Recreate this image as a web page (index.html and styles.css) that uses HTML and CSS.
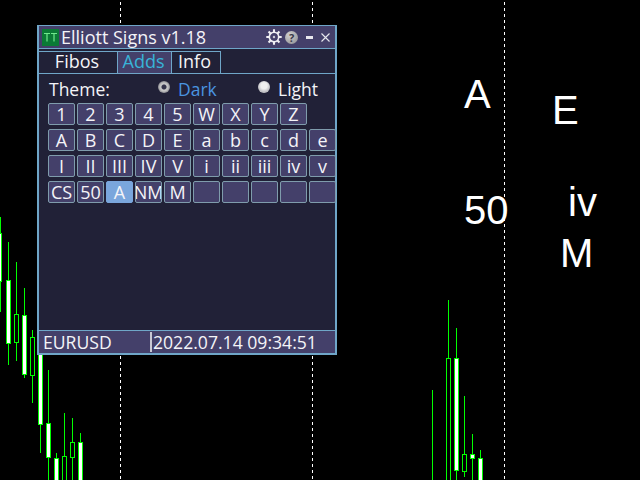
FILE: index.html
```html
<!DOCTYPE html>
<html lang="en">
<head>
<meta charset="utf-8">
<title>Elliott Signs v1.18</title>
<link rel="stylesheet" href="styles.css">
</head>
<body>
<div class="chart">
<svg class="chart-svg" width="640" height="480" viewBox="0 0 640 480">
  <g class="grid">
    <line x1="120.5" y1="0" x2="120.5" y2="480"/><line x1="312.5" y1="0" x2="312.5" y2="480"/><line x1="504.5" y1="0" x2="504.5" y2="480"/>
  </g>
  <g class="wick">
    <line x1="0.5" y1="217" x2="0.5" y2="312"/><line x1="8.5" y1="242" x2="8.5" y2="365"/><line x1="16.5" y1="262" x2="16.5" y2="361"/>
    <line x1="24.5" y1="288" x2="24.5" y2="378"/><line x1="32.5" y1="330" x2="32.5" y2="403"/><line x1="40.5" y1="340" x2="40.5" y2="453"/>
    <line x1="48.5" y1="370" x2="48.5" y2="480"/><line x1="56.5" y1="453" x2="56.5" y2="480"/><line x1="64.5" y1="413" x2="64.5" y2="480"/>
    <line x1="72.5" y1="418" x2="72.5" y2="480"/><line x1="80.5" y1="433" x2="80.5" y2="480"/>
    <line x1="432.5" y1="390" x2="432.5" y2="480"/><line x1="448.5" y1="300" x2="448.5" y2="480"/><line x1="456.5" y1="328" x2="456.5" y2="480"/>
    <line x1="464.5" y1="396" x2="464.5" y2="477"/><line x1="472.5" y1="434" x2="472.5" y2="480"/><line x1="480.5" y1="450" x2="480.5" y2="480"/>
  </g>
  <g class="bull">
    <rect x="-2.5" y="233.5" width="4" height="48"/><rect x="6.5" y="280.5" width="4" height="63"/><rect x="22.5" y="315.5" width="4" height="59"/>
    <rect x="38.5" y="340.5" width="4" height="84"/><rect x="46.5" y="423.5" width="4" height="34"/><rect x="54.5" y="458.5" width="4" height="24"/>
    <rect x="78.5" y="442.5" width="4" height="40"/><rect x="454.5" y="358.5" width="4" height="112"/><rect x="470.5" y="454.5" width="4" height="4"/>
    <rect x="478.5" y="458.5" width="4" height="24"/>
  </g>
  <g class="bear">
    <rect x="14.5" y="314.5" width="4" height="28"/><rect x="30.5" y="337.5" width="4" height="38"/><rect x="62.5" y="456.5" width="4" height="26"/>
    <rect x="70.5" y="442.5" width="4" height="15"/><rect x="446.5" y="358.5" width="4" height="124"/><rect x="462.5" y="454.5" width="4" height="17"/>
  </g>
  <g class="mark">
    <text x="464" y="108">A</text><text x="552" y="124">E</text><text x="464" y="224">50</text><text x="568" y="216">iv</text><text x="560" y="267">M</text>
  </g>
</svg>

<section class="panel">
  <header class="titlebar">
    <svg class="logo" width="17" height="17" viewBox="0 0 17 17"><rect width="17" height="17" fill="#0b7a36"/><path d="M2 4.5h6M5 4.5v8M9 4.5h6M12 4.5v8" stroke="#6fe88c" stroke-width="1.2" fill="none"/></svg>
    <span class="title">Elliott Signs v1.18</span>
    <svg class="gear" width="16" height="16" viewBox="0 0 17 17">
      <g stroke="#f0f0f4" stroke-width="2.2"><path d="M8.5 0.3v16.4M0.3 8.5h16.4M2.7 2.7l11.6 11.6M14.3 2.7L2.7 14.3"/></g>
      <circle cx="8.5" cy="8.5" r="5" fill="#44406a" stroke="#f0f0f4" stroke-width="1.7"/>
      <circle cx="8.5" cy="8.5" r="1.3" fill="#c8c8d4"/>
    </svg>
    <span class="help">?</span>
    <span class="minimize"></span>
    <svg class="close" width="9" height="9" viewBox="0 0 9 9"><path d="M0.5 0.5l8 8M8.5 0.5l-8 8" stroke="#e8e8ee" stroke-width="1.1"/></svg>
  </header>

  <nav class="tabs">
    <span class="tab tab-fibos">Fibos</span>
    <span class="tab tab-adds">Adds</span>
    <span class="tab tab-info">Info</span>
  </nav>

  <div class="theme">
    <span class="theme-label">Theme:</span>
    <span class="radio radio-on"></span>
    <span class="theme-dark">Dark</span>
    <span class="radio radio-off"></span>
    <span class="theme-light">Light</span>
  </div>

  <div class="keys">
    <span class="key">1</span><span class="key">2</span><span class="key">3</span><span class="key">4</span><span class="key">5</span><span class="key">W</span><span class="key">X</span><span class="key">Y</span><span class="key">Z</span><span class="key-gap"></span>
    <span class="key">A</span><span class="key">B</span><span class="key">C</span><span class="key">D</span><span class="key">E</span><span class="key">a</span><span class="key">b</span><span class="key">c</span><span class="key">d</span><span class="key">e</span>
    <span class="key">I</span><span class="key">II</span><span class="key">III</span><span class="key">IV</span><span class="key">V</span><span class="key">i</span><span class="key">ii</span><span class="key">iii</span><span class="key">iv</span><span class="key">v</span>
    <span class="key">CS</span><span class="key">50</span><span class="key key-on">A</span><span class="key">NM</span><span class="key">M</span><span class="key"></span><span class="key"></span><span class="key"></span><span class="key"></span><span class="key"></span>
  </div>

  <footer class="status">
    <span class="symbol">EURUSD</span>
    <span class="clock">2022.07.14 09:34:51</span>
  </footer>
</section>
</div>
</body>
</html>
```
FILE: styles.css
```css
* { box-sizing: border-box; }
html, body { margin: 0; padding: 0; background: #000; }
.chart { position: relative; width: 640px; height: 480px; overflow: hidden; background: #000; }
.chart-svg { position: absolute; left: 0; top: 0; display: block; }
.grid line { stroke: #fff; stroke-width: 1; stroke-dasharray: 3 3; stroke-dashoffset: 4; shape-rendering: crispEdges; }
.wick line { stroke: #00ff00; stroke-width: 1; shape-rendering: crispEdges; }
.bull rect { fill: #fff; stroke: #00ff00; stroke-width: 1; shape-rendering: crispEdges; }
.bear rect { fill: #000; stroke: #00ff00; stroke-width: 1; shape-rendering: crispEdges; }
.mark text { fill: #fff; font-family: "Liberation Sans", Arial, sans-serif; font-size: 40px; }

.panel {
  position: absolute; left: 37px; top: 25px; width: 300px; height: 330px;
  display: flex; flex-direction: column;
  background: #212137; border: 2px solid #6fa6c8; border-top-width: 1px;
  color: #f4f4f8; font-family: "Open Sans", "Noto Sans", sans-serif; font-size: 18px; line-height: 20px;
}
.titlebar { flex: none; height: 23px; display: flex; align-items: center; background: #44406a; border-bottom: 1px solid #6fa6c8; padding-left: 3px; }
.logo { flex: none; }
.title { margin-left: 2px; flex: 1; font-size: 18px; white-space: nowrap; }
.gear { flex: none; }
.help { flex: none; width: 13px; height: 13px; margin-left: 3px; border-radius: 50%; background: radial-gradient(circle at 35% 30%, #d0d0d0, #8c8c90); color: #3a3a48; font-size: 11px; font-weight: 700; line-height: 13px; text-align: center; }
.minimize { flex: none; width: 7px; height: 3px; margin-left: 8px; background: #e8e8ee; }
.close { flex: none; margin-left: 8px; margin-right: 5px; }

.tabs { flex: none; height: 23px; margin-top: 2px; display: flex; align-items: stretch; border-bottom: 1px solid #6fa6c8; }
.tab { border: 1px solid #6fa6c8; border-bottom: 0; text-align: center; line-height: 19px; padding-right: 2px; }
.tab-fibos { width: 79px; border-left: 0; }
.tab-adds { width: 55px; margin-left: -1px; background: #44406a; color: #38b4d8; }
.tab-info { width: 50px; margin-left: -1px; padding-right: 3px; }

.theme { flex: none; height: 29px; padding-top: 1px; display: flex; align-items: center; padding-left: 10px; font-size: 17.5px; }
.theme-label { width: 109px; }
.radio { flex: none; width: 12px; height: 12px; border-radius: 50%; margin-top: -4px; }
.radio-on { background: radial-gradient(circle, #33334a 0 2px, #c4c4c4 3px 4px, #8a8a90 6px); }
.radio-off { background: radial-gradient(circle at 50% 40%, #f0f0f0 0 3px, #c0c0c4 6px); }
.theme-dark { width: 80px; margin-left: 8px; color: #4a94e0; }
.theme-light { margin-left: 8px; }

.keys { flex: none; display: grid; grid-template-columns: repeat(10, 27px); grid-auto-rows: 22px; column-gap: 2px; row-gap: 4px; padding-left: 9px; }
.key { display: flex; align-items: center; justify-content: center; overflow: hidden; background: #44406a; border: 1px solid #7f9cac; border-radius: 2px; line-height: 20px; white-space: nowrap; }
.key-on { background: #7aa6dc; border-color: #7aa6dc; }

.status { flex: none; margin-top: auto; height: 23px; display: flex; align-items: center; background: #44406a; border-top: 1px solid #6fa6c8; padding-left: 4px; font-size: 17.6px; }
.symbol { width: 107px; }
.clock { flex: 1; border-left: 2px solid #c8c8d4; padding-left: 1px; height: 20px; white-space: nowrap; }
```
